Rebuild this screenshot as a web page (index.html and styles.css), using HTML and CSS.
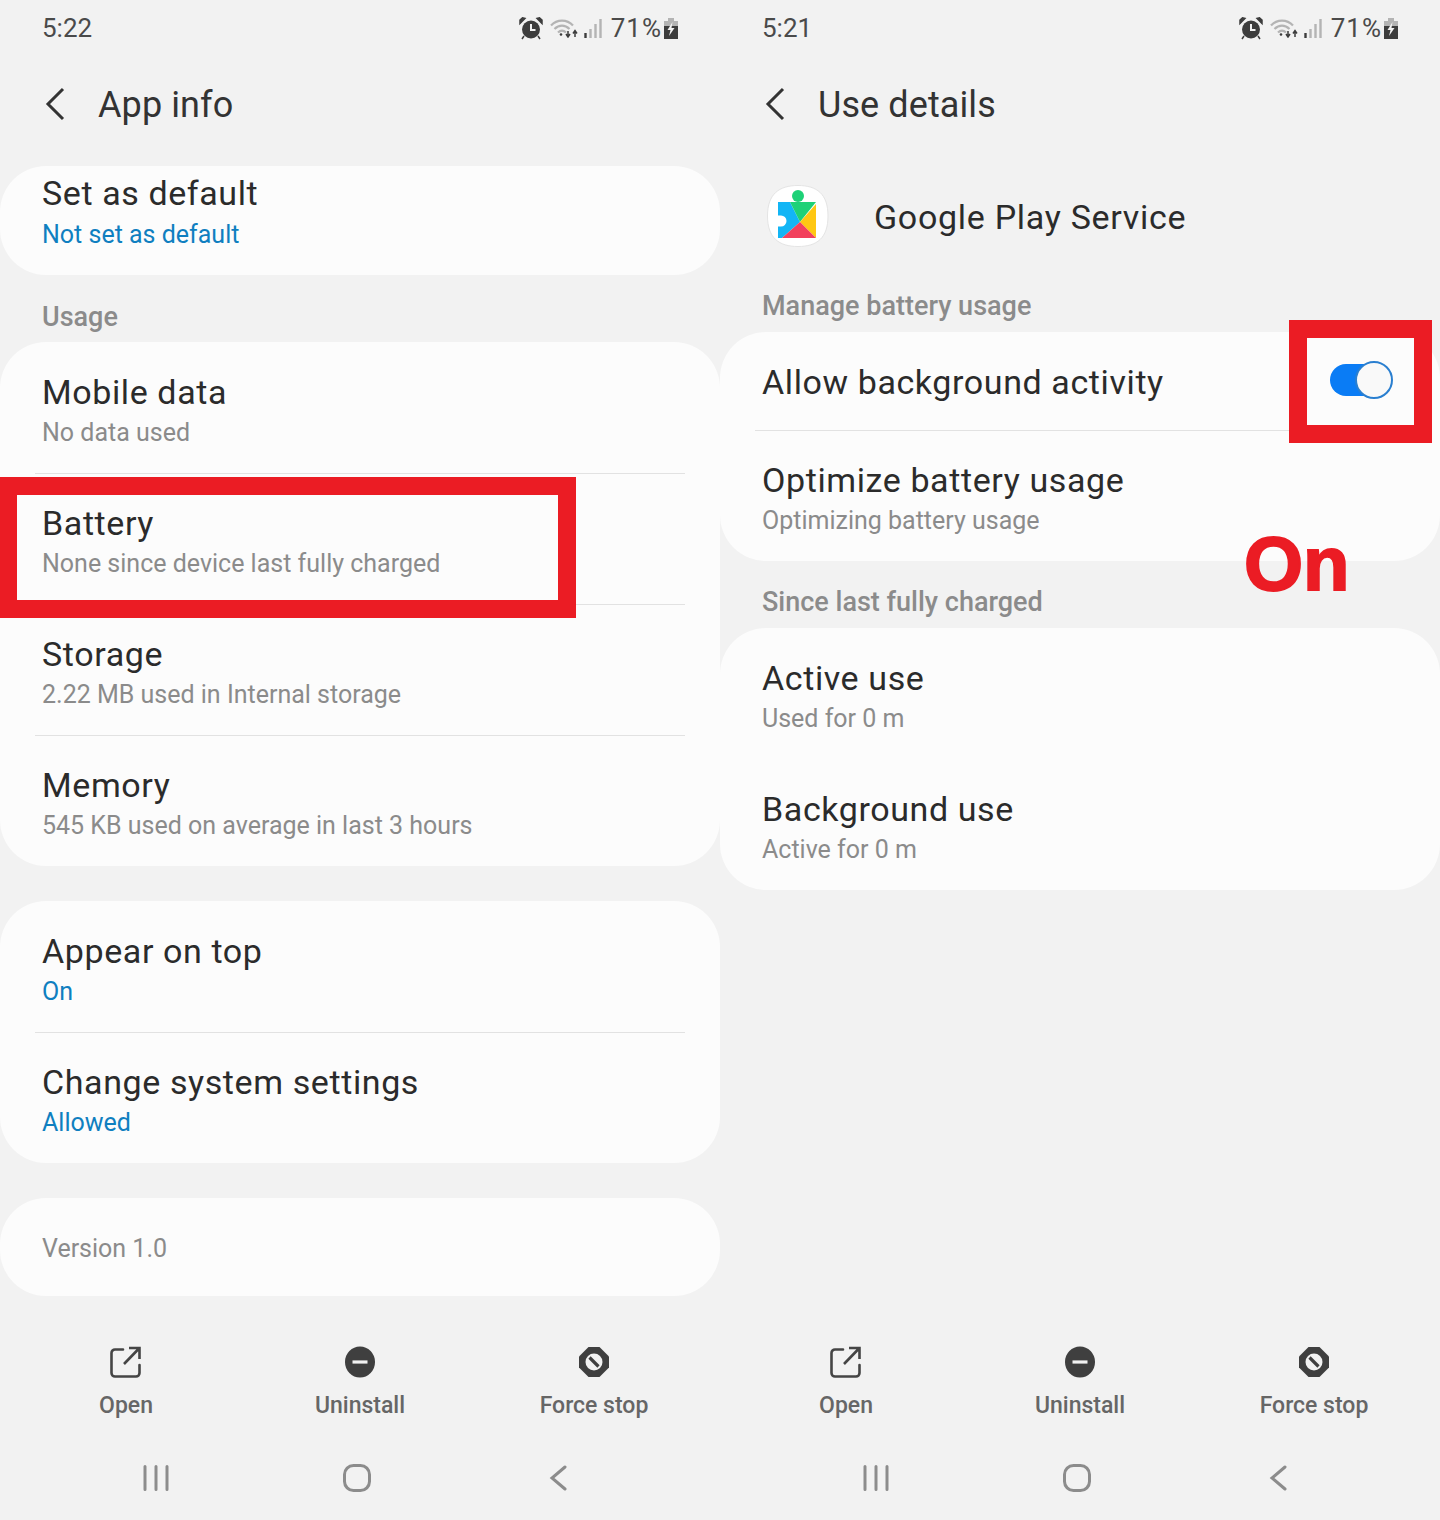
FILE: index.html
```html
<!DOCTYPE html>
<html lang="en">
<head>
  <meta charset="UTF-8">
  <meta name="viewport" content="width=device-width, initial-scale=1.0">
  <title>App info / Use details</title>
  <link rel="stylesheet" href="styles.css">
</head>
<body>
  <!-- Iconos compartidos -->
  <svg class="sprites" width="0" height="0">
    <symbol id="i-alarm" viewBox="0 0 24 23">
      <circle cx="12" cy="12.500" r="9" fill="#3d3d3d"/>
      <path d="M1 6.500 6 1.500 3.500.8 1 3zM23 6.500 18 1.500 20.500.8 23 3zM5 19l-2 3M19 19l2 3" fill="#3d3d3d" stroke="#3d3d3d" stroke-width="1.500"/>
      <path d="M12 7v6h4.500" fill="none" stroke="#f2f2f2" stroke-width="2"/>
    </symbol>
    <symbol id="i-wifi" viewBox="0 0 28 20">
      <path d="M1 7.500C7 1 17 1 23 7.500M4.500 11C9 6.500 15 6.500 19.500 11M8 14.500c2.500-2.500 5.500-2.500 8 0" fill="none" stroke="#b4b4b4" stroke-width="2.200"/>
      <circle cx="11" cy="16.500" r="1.300" fill="#3d3d3d"/>
      <path d="M18 13v5M16 16l2 3 2-3M25 19v-6M23 15.500l2-3 2 3" fill="none" stroke="#3d3d3d" stroke-width="1.500"/>
    </symbol>
    <symbol id="i-signal" viewBox="0 0 19 20">
      <path d="M1.500 15v5" stroke="#3d3d3d" stroke-width="2.400"/>
      <path d="M6.500 11v9M11.500 6v14M16.500 1v19" stroke="#b4b4b4" stroke-width="2.400"/>
    </symbol>
    <symbol id="i-batt" viewBox="0 0 14 21">
      <path d="M4 0h6v3H4z" fill="#b4b4b4"/>
      <path d="M0 3h14v5H0z" fill="#b4b4b4"/>
      <path d="M0 8h14v13H0z" fill="#3d3d3d"/>
      <path d="M8.500 4 3.500 12h3l-1.500 6 5.500-8H7.500z" fill="#f2f2f2"/>
    </symbol>
    <symbol id="i-back" viewBox="0 0 20 34">
      <path d="M18 2 3 17l15 15" fill="none" stroke="currentColor" stroke-width="3"/>
    </symbol>
    <symbol id="i-open" viewBox="0 0 32 32">
      <path d="M13 3.500H5a3.500 3.500 0 0 0-3.500 3.500v20A3.500 3.500 0 0 0 5 30.500h21a3.500 3.500 0 0 0 3.500-3.500v-8" fill="none" stroke="#454545" stroke-width="2.600" stroke-linecap="round"/>
      <path d="M14 18 28.500 3M19 2h10.500v11" fill="none" stroke="#454545" stroke-width="2.600"/>
    </symbol>
    <symbol id="i-minus" viewBox="0 0 32 32">
      <ellipse cx="16" cy="16" rx="15" ry="15.500" fill="#3f3f3f"/>
      <path d="M8.500 16h15" stroke="#f2f2f2" stroke-width="3.200"/>
    </symbol>
    <symbol id="i-stop" viewBox="0 0 32 32">
      <path d="M10.500 1h11l9.500 9.500v11L21.500 31h-11L1 21.500v-11z" fill="#3f3f3f"/>
      <circle cx="16" cy="16" r="8.500" fill="#f2f2f2"/>
      <path d="M11.500 11.500l9 9" stroke="#3f3f3f" stroke-width="3.200"/>
    </symbol>
    <symbol id="i-recents" viewBox="0 0 26 26">
      <path d="M2 1.500v23M13 1.500v23M24 1.500v23" stroke="#8c8c8c" stroke-width="3" stroke-linecap="round"/>
    </symbol>
    <symbol id="i-home" viewBox="0 0 28 28">
      <rect x="1.500" y="1.500" width="25" height="25" rx="9" fill="none" stroke="#8c8c8c" stroke-width="3"/>
    </symbol>
    <symbol id="i-navback" viewBox="0 0 18 26">
      <path d="M16 2 3 13l13 11" fill="none" stroke="#8c8c8c" stroke-width="3" stroke-linecap="round"/>
    </symbol>
  </svg>

  <!-- Pantalla izquierda -->
  <section class="screen">
    <div class="status">
      <span class="clock">5:22</span>
      <div class="status-icons">
        <svg class="ic-alarm"><use href="#i-alarm"/></svg>
        <svg class="ic-wifi"><use href="#i-wifi"/></svg>
        <svg class="ic-signal"><use href="#i-signal"/></svg>
        <span class="pct">71%</span>
        <svg class="ic-batt"><use href="#i-batt"/></svg>
      </div>
    </div>
    <header class="head">
      <svg class="ic-back"><use href="#i-back"/></svg>
      <h1>App info</h1>
    </header>

    <div class="card">
      <div class="row row-cut">
        <div class="title">Set as default</div>
        <div class="sub blue">Not set as default</div>
      </div>
    </div>

    <div class="label label-usage">Usage</div>
    <div class="card">
      <div class="row line">
        <div class="title">Mobile data</div>
        <div class="sub">No data used</div>
      </div>
      <div class="row line">
        <div class="title">Battery</div>
        <div class="sub">None since device last fully charged</div>
      </div>
      <div class="row line">
        <div class="title">Storage</div>
        <div class="sub">2.22 MB used in Internal storage</div>
      </div>
      <div class="row">
        <div class="title">Memory</div>
        <div class="sub">545 KB used on average in last 3 hours</div>
      </div>
    </div>

    <div class="card card-gap">
      <div class="row line">
        <div class="title">Appear on top</div>
        <div class="sub blue">On</div>
      </div>
      <div class="row">
        <div class="title">Change system settings</div>
        <div class="sub blue">Allowed</div>
      </div>
    </div>

    <div class="card card-gap">
      <div class="row-version">Version 1.0</div>
    </div>

    <footer class="foot">
      <div class="actions">
        <div class="action"><svg><use href="#i-open"/></svg><span>Open</span></div>
        <div class="action"><svg><use href="#i-minus"/></svg><span>Uninstall</span></div>
        <div class="action"><svg><use href="#i-stop"/></svg><span>Force stop</span></div>
      </div>
      <div class="nav">
        <svg class="nav-recents"><use href="#i-recents"/></svg>
        <svg class="nav-home"><use href="#i-home"/></svg>
        <svg class="nav-back"><use href="#i-navback"/></svg>
      </div>
    </footer>

    <div class="redbox box-battery"></div>
  </section>

  <!-- Pantalla derecha -->
  <section class="screen">
    <div class="status">
      <span class="clock">5:21</span>
      <div class="status-icons">
        <svg class="ic-alarm"><use href="#i-alarm"/></svg>
        <svg class="ic-wifi"><use href="#i-wifi"/></svg>
        <svg class="ic-signal"><use href="#i-signal"/></svg>
        <span class="pct">71%</span>
        <svg class="ic-batt"><use href="#i-batt"/></svg>
      </div>
    </div>
    <header class="head">
      <svg class="ic-back"><use href="#i-back"/></svg>
      <h1>Use details</h1>
    </header>

    <div class="app">
      <svg class="app-icon" viewBox="0 0 62 62">
        <path d="M31 .5C50 .5 61 9 61 31S50 61.500 31 61.500.5 53 .5 31 12 .5 31 .5z" fill="#fff" stroke="#e4e4e4"/>
        <path d="M11 17H23L33 37 15 53H11V41.500H14a5.500 5.500 0 0 0 0-11H11z" fill="#12b5f5"/>
        <circle cx="31" cy="11" r="6" fill="#1ed177"/>
        <path d="M23 17H49L33 37z" fill="#1ed177"/>
        <path d="M49 19V53L33 37z" fill="#ffc712"/>
        <path d="M15 53h34L33 37z" fill="#f2405c"/>
      </svg>
      <span class="app-name">Google Play Service</span>
    </div>

    <div class="label label-manage">Manage battery usage</div>
    <div class="card">
      <div class="row row-toggle line">
        <div class="title">Allow background activity</div>
        <div class="switch"><div class="knob"></div></div>
      </div>
      <div class="row">
        <div class="title">Optimize battery usage</div>
        <div class="sub">Optimizing battery usage</div>
      </div>
    </div>

    <div class="label label-since">Since last fully charged</div>
    <div class="card">
      <div class="row">
        <div class="title">Active use</div>
        <div class="sub">Used for 0 m</div>
      </div>
      <div class="row">
        <div class="title">Background use</div>
        <div class="sub">Active for 0 m</div>
      </div>
    </div>

    <footer class="foot">
      <div class="actions">
        <div class="action"><svg><use href="#i-open"/></svg><span>Open</span></div>
        <div class="action"><svg><use href="#i-minus"/></svg><span>Uninstall</span></div>
        <div class="action"><svg><use href="#i-stop"/></svg><span>Force stop</span></div>
      </div>
      <div class="nav">
        <svg class="nav-recents"><use href="#i-recents"/></svg>
        <svg class="nav-home"><use href="#i-home"/></svg>
        <svg class="nav-back"><use href="#i-navback"/></svg>
      </div>
    </footer>

    <div class="redbox box-toggle"></div>
    <div class="on-text">On</div>
  </section>
</body>
</html>
```

FILE: styles.css
```css
body {
  margin: 0;
  display: flex;
  width: 1440px;
  height: 1520px;
  overflow: hidden;
  background: #f2f2f2;
  font-family: Roboto, "Noto Sans", sans-serif;
  color: #2b2b2b;
}
.sprites {
  position: absolute;
}
.screen {
  position: relative;
  width: 720px;
  height: 1520px;
  display: flex;
  flex-direction: column;
}
/* Barra de estado */
.status {
  height: 56px;
  padding: 0 42px;
  display: flex;
  align-items: center;
  justify-content: space-between;
  color: #4a4a4a;
  font-size: 26px;
}
.status-icons {
  display: flex;
  align-items: center;
}
.ic-alarm { width: 24px; height: 23px; margin-right: 7px; }
.ic-wifi { width: 28px; height: 20px; margin-right: 6px; }
.ic-signal { width: 19px; height: 20px; margin-right: 8px; }
.ic-batt { width: 14px; height: 21px; margin-left: 2px; }
.pct {
  letter-spacing: 1px;
}
/* Cabecera */
.head {
  height: 96px;
  margin-bottom: 14px;
  padding-left: 45px;
  display: flex;
  align-items: center;
  color: #333;
}
.ic-back {
  width: 20px;
  height: 34px;
  margin-right: 33px;
}
h1 {
  margin: 2px 0 0;
  font-size: 36px;
  font-weight: 400;
  letter-spacing: 0.1px;
}
/* Tarjetas y filas */
.card {
  background: #fcfcfc;
  border-radius: 46px;
}
.card-gap {
  margin-top: 35px;
}
.row {
  position: relative;
  height: 131px;
  box-sizing: border-box;
  padding: 30px 42px 0;
}
.row.line::after {
  content: "";
  position: absolute;
  left: 35px;
  right: 35px;
  bottom: -1px;
  height: 1px;
  background: #e2e2e2;
}
.row-cut {
  height: 109px;
  padding-top: 7px;
}
.row-cut .sub {
  margin-top: 5px;
}
.row-toggle {
  height: 98px;
  display: flex;
  align-items: flex-start;
  justify-content: space-between;
}
.title {
  font-size: 34px;
  line-height: 40px;
  letter-spacing: 0.6px;
}
.sub {
  margin-top: 4px;
  font-size: 25px;
  line-height: 34px;
  color: #8b8b8b;
}
.blue {
  color: #0f7fc0;
}
.label {
  padding-left: 42px;
  font-size: 27px;
  font-weight: 500;
  line-height: 34px;
  color: #8b8b8b;
}
.label-usage {
  margin: 25px 0 8px;
}
.label-manage {
  margin: 0 0 9px;
}
.label-since {
  margin: 24px 0 9px;
}
.row-version {
  height: 96px;
  padding: 2px 0 0 42px;
  display: flex;
  align-items: center;
  font-size: 25px;
  color: #8b8b8b;
}
/* Fila de la app */
.app {
  height: 62px;
  margin: 19px 0 42px;
  padding-left: 47px;
  display: flex;
  align-items: center;
}
.app-icon {
  width: 62px;
  height: 62px;
  margin-right: 45px;
}
.app-name {
  margin-top: 2px;
  font-size: 34px;
  letter-spacing: 0.7px;
}
/* Interruptor */
.switch {
  position: relative;
  width: 50px;
  height: 32px;
  margin: 2px 18px 0 0;
  background: #0a7cf5;
  border-radius: 16px;
}
.knob {
  position: absolute;
  top: -3px;
  left: 25px;
  width: 34px;
  height: 34px;
  background: #f9f9f9;
  border: 2px solid #2a7fd0;
  border-radius: 50%;
}
/* Pie */
.foot {
  margin-top: auto;
  padding-bottom: 27px;
}
.actions {
  display: grid;
  grid-template-columns: repeat(3, 1fr);
  padding: 0 9px;
  margin-bottom: 42px;
}
.action {
  display: flex;
  flex-direction: column;
  align-items: center;
  gap: 13px;
  font-size: 23px;
  font-weight: 500;
  line-height: 30px;
  color: #666;
}
.action svg {
  width: 32px;
  height: 32px;
}
.nav {
  display: grid;
  grid-template-columns: repeat(3, 201px);
  padding-left: 55px;
  height: 30px;
  align-items: center;
  justify-items: center;
}
.nav-recents { width: 26px; height: 26px; }
.nav-home { width: 28px; height: 28px; }
.nav-back { width: 18px; height: 26px; }
/* Anotaciones en rojo */
.redbox {
  position: absolute;
  border: 18px solid #eb1c24;
  box-sizing: border-box;
}
.box-battery {
  left: -1px;
  top: 477px;
  width: 577px;
  height: 141px;
}
.box-toggle {
  left: 569px;
  top: 320px;
  width: 143px;
  height: 123px;
}
.on-text {
  position: absolute;
  left: 524px;
  top: 522px;
  font-family: "Liberation Sans", Arial, sans-serif;
  font-size: 76px;
  font-weight: 700;
  line-height: 84px;
  color: #eb1c24;
  -webkit-text-stroke: 2px #eb1c24;
}
```
